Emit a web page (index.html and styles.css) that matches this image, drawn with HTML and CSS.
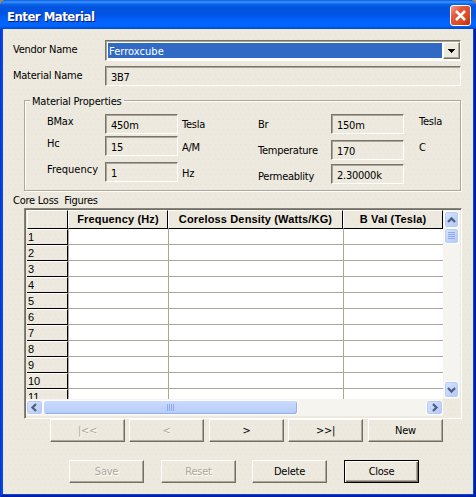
FILE: index.html
```html
<!DOCTYPE html>
<html lang="en">
<head>
<meta charset="utf-8">
<title>Enter Material</title>
<link rel="stylesheet" href="styles.css">
</head>
<body>
<main class="window">
  <header class="titlebar">
    <h1>Enter Material</h1>
    <button class="close-x" aria-label="Close"><svg width="21" height="21" viewBox="0 0 21 21"><path d="M6 6l9 9M15 6l-9 9" stroke="#fff" stroke-width="2.5"/></svg></button>
  </header>
  <div class="client">
    <div class="form-row vendor">
      <label>Vendor Name</label>
      <div class="combo"><span class="selected">Ferroxcube</span><button class="raised arrow"><svg width="15" height="15" viewBox="0 0 15 15" shape-rendering="crispEdges"><path d="M4 6h7v1h-1v1H9v1H8v1H7V9H6V8H5V7H4z"/></svg></button></div>
    </div>
    <div class="form-row material">
      <label>Material Name</label>
      <div class="field">3B7</div>
    </div>
    <fieldset class="props">
      <legend>Material Properties</legend>
      <div class="col names-a"><span>BMax</span><span>Hc</span><span class="wide">Frequency</span></div>
      <div class="col values-a"><div class="field">450m</div><div class="field">15</div><div class="field">1</div></div>
      <div class="col units-a"><span>Tesla</span><span>A/M</span><span>Hz</span></div>
      <div class="col names-b"><span>Br</span><span>Temperature</span><span>Permeablity</span></div>
      <div class="col values-b"><div class="field">150m</div><div class="field">170</div><div class="field">2.30000k</div></div>
      <div class="col units-b"><span>Tesla</span><span>C</span></div>
    </fieldset>
    <p class="caption">Core Loss&nbsp; Figures</p>
    <section class="sheet">
      <div class="cells">
        <div class="head"><b></b><b>Frequency (Hz)</b><b>Coreloss Density (Watts/KG)</b><b>B Val (Tesla)</b></div>
        <div class="line"><b>1</b><i></i><i></i><i></i></div>
        <div class="line"><b>2</b><i></i><i></i><i></i></div>
        <div class="line"><b>3</b><i></i><i></i><i></i></div>
        <div class="line"><b>4</b><i></i><i></i><i></i></div>
        <div class="line"><b>5</b><i></i><i></i><i></i></div>
        <div class="line"><b>6</b><i></i><i></i><i></i></div>
        <div class="line"><b>7</b><i></i><i></i><i></i></div>
        <div class="line"><b>8</b><i></i><i></i><i></i></div>
        <div class="line"><b>9</b><i></i><i></i><i></i></div>
        <div class="line"><b>10</b><i></i><i></i><i></i></div>
        <div class="line"><b>11</b><i></i><i></i><i></i></div>
      </div>
      <div class="scroll vertical">
        <span class="sb"><svg width="13" height="14" viewBox="0 0 13 14"><path d="M3 9l3.500-3.500L10 9"/></svg></span>
        <span class="thumb"><svg width="7" height="8" viewBox="0 0 7 8" shape-rendering="crispEdges"><path class="grip" d="M0 .5h7M0 2.500h7M0 4.500h7M0 6.500h7"/></svg></span>
        <span class="track"></span>
        <span class="sb"><svg width="13" height="14" viewBox="0 0 13 14"><path d="M3 5l3.500 3.500L10 5"/></svg></span>
      </div>
      <div class="scroll horizontal">
        <span class="sb"><svg width="13" height="13" viewBox="0 0 13 13"><path d="M8 3L4.500 6.500 8 10"/></svg></span>
        <span class="thumb"><svg width="8" height="7" viewBox="0 0 8 7" shape-rendering="crispEdges"><path class="grip" d="M.5 0v7M2.500 0v7M4.500 0v7M6.500 0v7"/></svg></span>
        <span class="track"></span>
        <span class="sb"><svg width="13" height="13" viewBox="0 0 13 13"><path d="M5 3l3.500 3.500L5 10"/></svg></span>
      </div>
    </section>
    <nav class="buttons nav">
      <button class="raised" disabled>|&lt;&lt;</button><button class="raised" disabled>&lt;</button><button class="raised">&gt;</button><button class="raised">&gt;&gt;|</button><button class="raised">New</button>
    </nav>
    <footer class="buttons actions">
      <button class="raised" disabled>Save</button><button class="raised" disabled>Reset</button><button class="raised">Delete</button><button class="raised default">Close</button>
    </footer>
  </div>
</main>
</body>
</html>
```
FILE: styles.css
```css
* { box-sizing: border-box; }
body {
  margin: 0;
  background: #8d8a84;
  font: 11px/14px "DejaVu Sans Condensed", "DejaVu Sans", sans-serif;
  font-stretch: condensed;
  letter-spacing: -.25px;
  color: #000;
}
button { font: inherit; letter-spacing: inherit; color: inherit; padding: 0; }
svg { display: block; }
.window {
  width: 476px;
  height: 497px;
  padding: 0 3px 3px;
  border-radius: 7px 7px 0 0;
  overflow: hidden;
  background: #0549df;
  box-shadow: inset 1px 0 #0831d9, inset -2px 0 #001ea0, inset 0 -2px #001ea0;
}
.titlebar {
  height: 29px;
  margin: 0 -3px;
  padding: 0 5px 0 7px;
  display: flex;
  justify-content: space-between;
  background: linear-gradient(#0c59df 0, #3c95ff 2px, #0866ee 4px, #0355dd 7px, #0054e3 14px, #0261fb 20px, #0267ff 26px, #0144ce 29px);
}
h1 {
  margin: 8px 0 0;
  font: bold 13px/18px "DejaVu Sans Condensed", sans-serif;
  font-stretch: condensed;
  letter-spacing: -.5px;
  color: #fff;
  text-shadow: 1px 1px #0a1883;
}
.close-x {
  width: 21px;
  height: 21px;
  margin-top: 5px;
  border: 1px solid #fff;
  border-radius: 3px;
  background: linear-gradient(135deg, #f0a08a, #e2563a 35%, #dc4a22 70%, #b92d0c);
}
.close-x svg { margin: -1px; }
.client {
  height: 465px;
  padding: 11px 12px 0 10px;
  background-color: #ede9de;
  background-image:
    conic-gradient(from 0deg at 1px 1px, transparent 75%, #dde3d5 0),
    conic-gradient(from 0deg at 1px 1px, transparent 75%, #dde3d5 0);
  background-size: 5px 10px;
  background-position: 0 0, 2px 5px;
}
.form-row { display: grid; grid-template-columns: 92px 356px; }
.form-row label { padding-top: 3px; }
.material { margin-top: 5px; }
.combo, .field { border: 1px solid; border-color: #77756a #fff #fff #77756a; box-shadow: inset 1px 1px #aaa697; }
.combo { height: 21px; display: flex; padding: 1px 0 1px 1px; background: #fff; }
.selected { width: 335px; height: 15px; margin: 1px 0 0 1px; padding-left: 1px; line-height: 17px; letter-spacing: .05px; background: #316ac5; color: #fff; }
.field { height: 20px; padding: 4px 0 0 5px; }
.raised {
  border: 1px solid;
  border-color: #fff #716f64 #716f64 #fff;
  box-shadow: inset -1px -1px #aca899;
  background: transparent;
}
.arrow { width: 17px; height: 17px; margin-left: 1px; background: #ece9de; }
.props {
  display: flex;
  position: relative;
  width: 437px;
  height: 91px;
  margin: 14px 0 0 11px;
  padding: 13px 0 0 22px;
  border: 1px solid #aca899;
  box-shadow: 1px 1px #fff, inset 1px 1px #fff;
}
.props legend { position: absolute; top: -6px; left: 5px; padding: 0 2px; background: #ece9de; letter-spacing: -.2px; }
.col { display: flex; flex-direction: column; }
.col span { height: 14px; }
.names-a { width: 58px; padding-top: 1px; }
.names-a span:nth-child(2) { margin-top: 8px; }
.names-a span:nth-child(3) { margin-top: 12px; }
.wide { letter-spacing: 0; }
.values-a, .values-b { width: 73px; }
.values-a .field:nth-child(2) { margin-top: 2px; }
.values-a .field:nth-child(3) { margin-top: 6px; }
.units-a { width: 76px; margin-left: 4px; padding-top: 4px; gap: 9px; }
.units-a span:nth-child(3) { margin-top: 3px; }
.names-b { width: 73px; padding-top: 4px; gap: 12px; }
.values-b .field:nth-child(2) { margin-top: 6px; }
.values-b .field:nth-child(3) { margin-top: 4px; }
.units-b { margin-left: 15px; padding-top: 1px; gap: 12px; }
.caption { margin: 3px 0 0; height: 14px; white-space: pre; }
.sheet {
  display: grid;
  grid-template: 189px 17px / 417px 17px;
  width: 438px;
  height: 211px;
  margin: 0 0 0 11px;
  padding: 1px 0 0 1px;
  border: 1px solid;
  border-color: #87857b #fff #fff #87857b;
  box-shadow: inset 1px 1px #716f64;
}
.cells { overflow: hidden; padding-left: 1px; }
.head, .line { display: grid; grid-template: 16px / 41px 100px 175px 100px; }
.head { height: 19px; grid-template-rows: 19px; }
.head b { border: 1px solid; border-color: #fff #000 #000 #fff; text-align: center; font: bold 11px/17px "Liberation Sans", sans-serif; letter-spacing: .15px; white-space: nowrap; }
.line b { height: 16px; border-top: 1px solid #fff; border-right: 1px solid #000; border-bottom: 1px solid #000; padding-left: 1px; font: 11px/15px "Liberation Sans", sans-serif; letter-spacing: 0; }
.line i { background: #fff; border-left: 1px solid #aca899; border-bottom: 1px solid #aca899; }
.scroll { display: flex; background: #f5f4ee; }
.vertical { flex-direction: column; padding: 1px; }
.horizontal { padding: 1px 0; }
.sb, .thumb { flex: none; display: flex; align-items: center; justify-content: center; border: 1px solid #fff; border-radius: 3px; background: linear-gradient(135deg, #d8e4ff, #b4c8f6); box-shadow: inset 0 0 0 1px #b8cbf6; }
.sb path { fill: none; stroke: #4d6185; stroke-width: 2.3; }
.grip { stroke: #8caaed; }
.vertical .sb { width: 15px; height: 17px; }
.vertical .thumb { width: 15px; height: 16px; }
.horizontal .sb { width: 17px; height: 15px; }
.horizontal .thumb { width: 255px; height: 15px; background: linear-gradient(#cadafe, #b8ccfa); box-shadow: inset -1px -1px #8fb0ec; }
.track { flex: 1; }
.buttons { display: flex; }
.buttons .raised { width: 75px; height: 23px; }
.nav { margin: 0 0 0 37px; gap: 4px; }
.nav .raised:nth-child(3), .nav .raised:nth-child(5) { margin-left: 1px; }
.actions { margin: 18px 0 0 56px; gap: 17px; }
.actions .raised:nth-child(3) { margin-left: -1px; }
button:disabled { color: #aca899; text-shadow: 1px 1px #fff; }
.default { border-color: #000; box-shadow: inset 1px 1px #fff, inset -1px -1px #716f64, inset -2px -2px #aca899; }
```
